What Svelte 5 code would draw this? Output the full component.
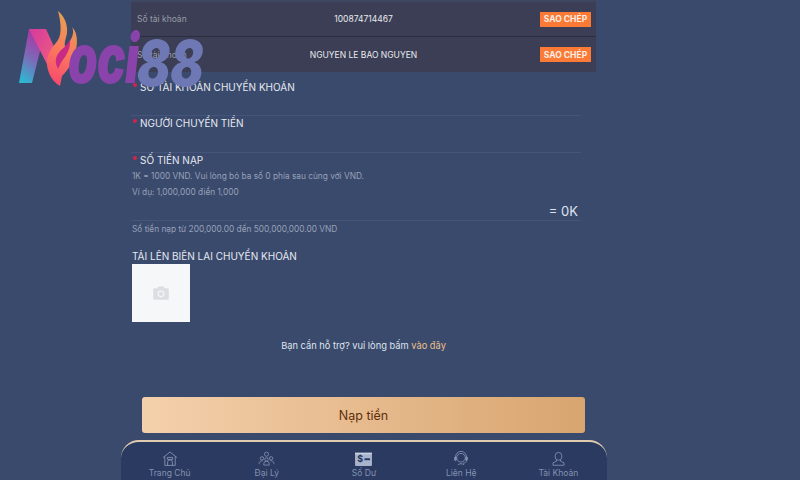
<script>
  const rows = [
    { label: 'Số tài khoản', value: '100874714467' },
    { label: 'Số tài khoản', value: 'NGUYEN LE BAO NGUYEN' }
  ];
</script>

<div class="page">
  <main class="column">
    <section class="table">
      {#each rows as row}
        <div class="row">
          <span class="row-label">{row.label}</span>
          <span class="row-value">{row.value}</span>
          <button class="copy">SAO CHÉP</button>
        </div>
      {/each}
    </section>

    <section class="form">
      <div class="field f1"><span class="star"></span><span class="label">SỐ TÀI KHOẢN CHUYỂN KHOẢN</span></div>
      <div class="field f2"><span class="star"></span><span class="label">NGƯỜI CHUYỂN TIỀN</span></div>
      <div class="field f3">
        <div><span class="star"></span><span class="label">SỐ TIỀN NẠP</span></div>
        <p class="hint h1">1K = 1000 VND. Vui lòng bỏ ba số 0 phía sau cùng với VND.</p>
        <p class="hint h2">Ví dụ: 1,000,000 điền 1,000</p>
        <div class="equals">= 0K</div>
      </div>
      <p class="hint range">Số tiền nạp từ 200,000.00 đến 500,000,000.00 VND</p>
      <div class="upload-title">TẢI LÊN BIÊN LAI CHUYỂN KHOẢN</div>
      <div class="upload">
        <svg width="16" height="14" viewBox="0 0 16 14"><path fill="#dcdee2" d="M5.2 0.5h5.6l1 1.8H14.6a1.2 1.2 0 0 1 1.2 1.2v9a1.2 1.2 0 0 1-1.2 1.2H1.4a1.2 1.2 0 0 1-1.2-1.2v-9a1.2 1.2 0 0 1 1.2-1.2h2.8z"/><circle cx="8" cy="7.8" r="3.4" fill="#f6f7f9"/><circle cx="8" cy="7.8" r="2.3" fill="#dcdee2"/></svg>
      </div>
      <p class="support">Bạn cần hỗ trợ? vui lòng bấm <span class="link">vào đây</span></p>
    </section>

    <button class="submit">Nạp tiền</button>

    <nav class="nav">
      <div class="nav-item">
        <svg width="16" height="15" viewBox="0 0 16 15" fill="none" stroke="#8492b3" stroke-width="0.9"><path d="M1 6.6 8 1 15 6.6M2.8 5.4V14.4h10.4V5.4"/><path d="M5.6 14.4v-3.2a2.4 2.4 0 0 1 4.8 0v3.2M5.4 6.4h5.2v2H5.4z"/></svg>
        <span>Trang Chủ</span>
      </div>
      <div class="nav-item">
        <svg width="17" height="15" viewBox="0 0 17 16" fill="none" stroke="#8492b3" stroke-width="0.9"><circle cx="8.5" cy="3.4" r="2.2"/><circle cx="3.6" cy="7.8" r="1.8"/><circle cx="13.4" cy="7.8" r="1.8"/><circle cx="8.5" cy="9" r="1.8"/><path d="M5.6 15v-1.2a2.9 2.9 0 0 1 5.8 0V15zM.6 14v-.8a3 3 0 0 1 4-2.6M16.4 14v-.8a3 3 0 0 0-4-2.6M6 7.4 5.2 7M11 7.4l.8-.4"/></svg>
        <span>Đại Lý</span>
      </div>
      <div class="nav-item">
        <svg width="17" height="15" viewBox="0 0 18 16"><rect width="18" height="16" rx="1" fill="#a9b4cc"/><rect y="0" width="18" height="1.6" fill="#2b3a60"/><rect y="2.4" width="18" height="1" fill="#d5dae6"/><text x="2.4" y="12" font-size="9.5" font-weight="700" font-family="Inter, sans-serif" fill="#27365a">$</text><rect x="10" y="7.8" width="6" height="2" fill="#27365a"/></svg>
        <span>Số Dư</span>
      </div>
      <div class="nav-item">
        <svg width="16" height="15" viewBox="0 0 16 16" fill="none" stroke="#8492b3" stroke-width="0.9"><circle cx="8" cy="7.2" r="4.6"/><path d="M2.2 8V6.2a5.8 5.8 0 0 1 11.6 0V8"/><rect x="1.2" y="6.2" width="1.8" height="4" rx=".8" fill="#8492b3"/><rect x="13" y="6.2" width="1.8" height="4" rx=".8" fill="#8492b3"/><path d="M4.6 14.8c1-1.6 5.8-1.6 6.8 0M13.8 10c0 2-1.6 3-3.6 3"/></svg>
        <span>Liên Hệ</span>
      </div>
      <div class="nav-item">
        <svg width="15" height="15" viewBox="0 0 15 16" fill="none" stroke="#8492b3" stroke-width="0.9"><path d="M4 5a3.5 3.5 0 0 1 7 0v1.4a3.5 3.5 0 0 1-7 0z"/><path d="M5.4 9.6v1.2L1.6 12.6v2.6h11.8v-2.6L9.6 10.8V9.6"/></svg>
        <span>Tài Khoản</span>
      </div>
    </nav>
  </main>

  <div class="logo">
    <svg class="mark" width="60" height="76" viewBox="0 0 60 76" aria-hidden="true">
      <defs>
        <linearGradient id="stem" x1="0" y1="1" x2="0.35" y2="0">
          <stop offset="0" stop-color="#22c3d6"/><stop offset="0.55" stop-color="#7b6ab8"/><stop offset="1" stop-color="#a83aa5"/>
        </linearGradient>
        <linearGradient id="diag" x1="0" y1="0" x2="1" y2="1">
          <stop offset="0" stop-color="#d33aa0"/><stop offset="1" stop-color="#fb6a70"/>
        </linearGradient>
        <linearGradient id="flame" x1="0.4" y1="1" x2="0.6" y2="0">
          <stop offset="0" stop-color="#f8486f"/><stop offset="0.5" stop-color="#fa7d5c"/><stop offset="1" stop-color="#e2a350"/>
        </linearGradient>
      </defs>
      <path fill="url(#stem)" d="M11 19H19L26 25 14 73H1z"/>
      <path fill="url(#diag)" d="M11 19H28L43 52 39 74 33 62z"/>
      <path fill="url(#flame)" d="M40 1C46 6 50 14 49 23 48 30 45 33 48 39L54 27C56 22 55 19 54 17 59 22 60 30 58 40 55 53 50 60 44 66L42 76C35 72 30 64 29 55 28 44 35 37 40 30 44 24 43 12 40 1z"/>
      <path fill="#c92a85" d="M52 30C53 37 49 45 44 51 42 54 41 57 40 59 37 53 37 49 40 44 43 39 49 36 52 30z"/>
    </svg>
    <span class="oci">oci</span><span class="eight">88</span>
  </div>
</div>

<style>
  :global(body) { margin: 0; background: #3a4a6c; }
  .page {
    position: relative;
    width: 800px;
    height: 480px;
    overflow: hidden;
    background: #3a4a6c;
    font-family: Inter, "Noto Sans", sans-serif;
  }
  .column {
    width: 486px;
    margin-left: 121px;
    display: flex;
    flex-direction: column;
    height: 480px;
  }
  .table {
    width: 465px;
    margin: 0 0 0 10px;
    border-top: 2px solid #3d4760;
    background: #3b3e54;
  }
  .row {
    height: 35px;
    box-sizing: border-box;
    display: flex;
    align-items: center;
    border-bottom: 1px solid #2a2d3f;
    padding: 0 5px 0 6px;
    position: relative;
    background: #3b3e54;
  }
  .row:last-child { border-bottom: 0; }
  .row-label { font-size: 8.5px; color: #9a9daa; width: 120px; }
  .row-value {
    position: absolute;
    left: 0; right: 0; top: 0; bottom: 0;
    display: flex; align-items: center; justify-content: center;
    font-size: 8.5px;
    color: #e9eaef;
  }
  .copy {
    margin-left: auto;
    position: relative;
    width: 51px;
    height: 15px;
    padding: 0;
    border: 0;
    background: #fb7a35;
    color: #fbeee4;
    font: 700 8.5px Inter, sans-serif;
  }
  .form { padding-left: 11px; position: relative; height: 366px; }
  .field {
    position: relative;
    width: 450px;
    border-bottom: 1px solid #44547a;
    margin-left: -1px;
    padding-left: 1px;
    box-sizing: border-box;
    font-size: 10px;
    line-height: 14px;
  }
  .f1 { height: 44px; padding-top: 8px; }
  .f2 { height: 37px; }
  .f3 { height: 68px; }
  .star {
    display: inline-block;
    width: 4px; height: 4px;
    background: #d4234a;
    border-radius: 50%;
    margin: 0 3px 0 1px;
    vertical-align: 4px;
  }
  .label, .upload-title { font-size: 10px; color: #e6e9f1; line-height: 14px; }
  .hint { margin: 0; font-size: 8.3px; color: #97a1b8; line-height: 12px; }
  .h1 { margin-top: 3px; }
  .h2 { margin-top: 4px; }
  .equals {
    position: absolute;
    right: 3px;
    top: 50px;
    font-size: 13px;
    line-height: 16px;
    color: #dfe3ee;
  }
  .range { margin-top: 2px; }
  .upload-title { margin-top: 14px; }
  .upload {
    width: 58px;
    height: 58px;
    margin-top: 1px;
    background: #f6f7f9;
    display: flex;
    align-items: center;
    justify-content: center;
  }
  .support {
    margin: 17px 0 0 -1px;
    width: 465px;
    text-align: center;
    font-size: 9.3px;
    line-height: 14px;
    color: #dfe3ec;
  }
  .link { color: #ecc08e; }
  .submit {
    position: absolute;
    left: 142px;
    top: 397px;
    width: 443px;
    height: 36px;
    border: 0;
    border-radius: 3px;
    background: linear-gradient(90deg, #f4d0ac, #d8a56f);
    color: #5f2f0d;
    font: 12.5px Inter, sans-serif;
    padding: 0;
  }
  .nav {
    position: absolute;
    left: 121px;
    top: 440px;
    width: 486px;
    height: 40px;
    box-sizing: border-box;
    border-top: 2px solid #e2ccb0;
    border-radius: 18px 18px 0 0;
    background: #2a3a60;
    display: grid;
    grid-template-columns: repeat(5, 1fr);
  }
  .nav-item {
    display: flex;
    flex-direction: column;
    align-items: center;
    padding-top: 9px;
    font-size: 8.5px;
    line-height: 12px;
    color: #8492b3;
  }
  .nav-item svg { flex: none; margin-bottom: 1px; }
  .logo {
    position: absolute;
    left: 18px;
    top: 10px;
    width: 190px;
    height: 80px;
  }
  .mark { position: absolute; left: 0; top: 0; }
  .oci, .eight {
    position: absolute;
    transform-origin: 0 0;
    font-style: italic;
    font-weight: 900;
    font-family: Inter, sans-serif;
    line-height: 1;
  }
  .oci {
    left: 50px;
    top: 14px;
    font-size: 68px;
    letter-spacing: -1px;
    color: #8a43aa;
    transform: scaleX(0.7);
  }
  .eight {
    left: 119px;
    top: 22px;
    font-size: 63px;
    color: #6d78b5;
    transform: scaleX(0.78);
  }
</style>
